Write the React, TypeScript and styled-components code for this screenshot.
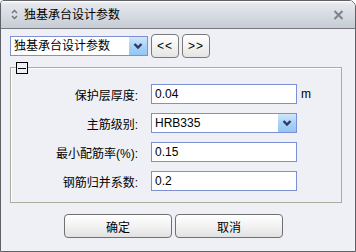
import React from "react";
import styled, { createGlobalStyle } from "styled-components";

const Global = createGlobalStyle`
  html, body { margin: 0; padding: 0; background: #ffffff; }
  body { font-family: "Liberation Sans", "Noto Sans CJK SC", sans-serif; font-size: 12px; color: #000; }
  * { box-sizing: border-box; }
`;

const Window = styled.div`
  width: 356px;
  height: 252px;
  border: 1px solid #5f6166;
  border-radius: 4px 7px 0 0;
  background: #eef0f5;
  display: flex;
  flex-direction: column;
  overflow: hidden;
`;

const TitleBar = styled.div`
  height: 28px;
  flex: none;
  display: flex;
  align-items: center;
  padding-left: 10px;
  padding-right: 11px;
  border-bottom: 1px solid #77797e;
  background: linear-gradient(#f7f8fa 0px, #e4e7ec 3px, #d7dbe2 14px, #c6ccd5 27px);
  box-shadow: inset 0 1px 0 #ffffff;
`;

const TitleText = styled.span`
  margin-left: 6px;
  font-size: 12px;
  line-height: 14px;
  color: #000;
  flex: 1;
`;

const Body = styled.div`
  flex: 1;
  display: flex;
  flex-direction: column;
  padding: 5px 9px 0 9px;
`;

const Toolbar = styled.div`
  display: flex;
  align-items: center;
  height: 24px;
`;

const Combo = styled.div<{ $w: number }>`
  width: ${(p) => p.$w}px;
  height: 20px;
  border: 1px solid #7d90d4;
  background: #ffffff;
  display: flex;
  align-items: center;
`;

const ComboText = styled.span`
  flex: 1;
  padding-left: 3px;
  font-size: 12px;
  line-height: 18px;
  white-space: nowrap;
  overflow: hidden;
`;

const ComboArrow = styled.div`
  width: 18px;
  height: 18px;
  background: linear-gradient(#d2e6fb, #a9d2f7 50%, #93c6f4);
  display: flex;
  align-items: center;
  justify-content: center;
`;

const NavButton = styled.button`
  width: 28px;
  height: 24px;
  margin-left: 3px;
  padding: 0;
  border: 1px solid #7a7a7a;
  border-radius: 4px;
  background: linear-gradient(#ffffff, #f3f3f3 50%, #e4e4e4);
  font-family: "Liberation Sans", sans-serif;
  font-size: 12px;
  letter-spacing: 1px;
  color: #000;
  display: flex;
  align-items: center;
  justify-content: center;
`;

const Group = styled.div`
  position: relative;
  margin-top: 9px;
  width: 332px;
  height: 136px;
  border: 1px solid #aeaba2;
  box-shadow: inset 1px 1px 0 #ffffff;
  display: flex;
  flex-direction: column;
  gap: 9px;
  padding-top: 16px;
`;

const Collapse = styled.div`
  position: absolute;
  left: 5px;
  top: -6px;
  width: 12px;
  height: 12px;
  border: 1px solid #000;
  background: #eef0f5;
  display: flex;
  align-items: center;
  justify-content: center;
  &::after {
    content: "";
    width: 8px;
    height: 1px;
    background: #000;
  }
`;

const Row = styled.div`
  display: flex;
  align-items: center;
  height: 20px;
`;

const Label = styled.span`
  width: 127px;
  margin-right: 13px;
  text-align: right;
  font-size: 12px;
  white-space: nowrap;
`;

const Input = styled.div`
  width: 146px;
  height: 20px;
  border: 1px solid #7d90d4;
  background: #ffffff;
  padding-left: 3px;
  font-size: 12px;
  line-height: 18px;
`;

const Unit = styled.span`
  margin-left: 4px;
  font-size: 12px;
`;

const Footer = styled.div`
  display: flex;
  gap: 3px;
  margin-top: 11px;
  padding-left: 54px;
`;

const DlgButton = styled.button`
  width: 108px;
  height: 24px;
  padding: 0;
  border: 1px solid #707070;
  border-radius: 4px;
  background: linear-gradient(#ffffff, #f2f2f2 50%, #e2e2e2);
  font-family: "Noto Sans CJK SC", sans-serif;
  font-size: 12px;
  color: #000;
`;

const Chevron = () => (
  <svg width="10" height="8" viewBox="0 0 10 8">
    <polyline points="1.5,2 5,5.5 8.5,2" fill="none" stroke="#2b3a66" strokeWidth="2.4" />
  </svg>
);

const Sorter = () => (
  <svg width="7" height="11" viewBox="0 0 7 11">
    <polyline points="1,4 3.5,1.5 6,4" fill="none" stroke="#6d7078" strokeWidth="1.3" />
    <polyline points="1,7 3.5,9.5 6,7" fill="none" stroke="#6d7078" strokeWidth="1.3" />
  </svg>
);

const CloseX = () => (
  <svg width="11" height="10" viewBox="0 0 11 10">
    <path d="M1.5,1 L9.5,9 M9.5,1 L1.5,9" stroke="#7f8288" strokeWidth="2" fill="none" />
  </svg>
);

export default function App() {
  return (
    <>
      <Global />
      <Window>
        <TitleBar>
          <Sorter />
          <TitleText>独基承台设计参数</TitleText>
          <CloseX />
        </TitleBar>
        <Body>
          <Toolbar>
            <Combo $w={138}>
              <ComboText>独基承台设计参数</ComboText>
              <ComboArrow>
                <Chevron />
              </ComboArrow>
            </Combo>
            <NavButton>&lt;&lt;</NavButton>
            <NavButton>&gt;&gt;</NavButton>
          </Toolbar>
          <Group>
            <Collapse />
            <Row>
              <Label>保护层厚度:</Label>
              <Input>0.04</Input>
              <Unit>m</Unit>
            </Row>
            <Row>
              <Label>主筋级别:</Label>
              <Combo $w={146}>
                <ComboText>HRB335</ComboText>
                <ComboArrow>
                  <Chevron />
                </ComboArrow>
              </Combo>
            </Row>
            <Row>
              <Label>最小配筋率(%):</Label>
              <Input>0.15</Input>
            </Row>
            <Row>
              <Label>钢筋归并系数:</Label>
              <Input>0.2</Input>
            </Row>
          </Group>
          <Footer>
            <DlgButton>确定</DlgButton>
            <DlgButton>取消</DlgButton>
          </Footer>
        </Body>
      </Window>
    </>
  );
}
